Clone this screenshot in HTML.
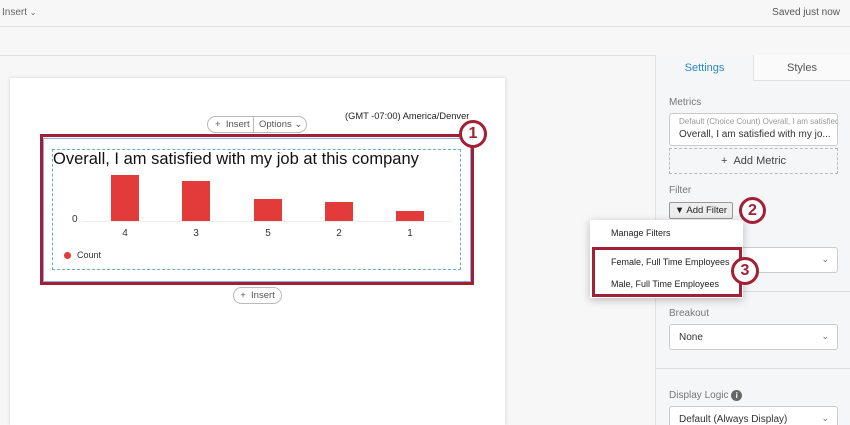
<!DOCTYPE html><html><head><style>
*{box-sizing:border-box;margin:0;padding:0}
html,body{width:850px;height:425px;overflow:hidden}
body{background:#f7f7f7;font-family:"Liberation Sans",sans-serif;position:relative;color:#333}
.a{position:absolute}
.lbl{font-size:10px;color:#777}
.box{background:#fff;border:1px solid #ccc;border-radius:3px}
.circ{position:absolute;border:3px solid #a31f34;border-radius:50%;background:#fff;color:#a31f34;font-weight:bold;text-align:center}
.bar{position:absolute;background:#e33a3a;width:28px}
.xl{position:absolute;top:228px;font-size:10px;width:28px;text-align:center}
.chev{font-size:9px;color:#666}
</style></head><body>
<div class="a" style="left:0;top:0;width:850px;height:27px;border-bottom:1px solid #e2e2e2"></div>
<div class="a" style="left:2px;top:7px;font-size:10px;color:#666">Insert <span style="font-size:8px">&#8964;</span></div>
<div class="a" style="right:10px;top:7px;font-size:10px;color:#555">Saved just now</div>
<div class="a" style="left:0;top:55px;width:850px;border-top:1px solid #e2e2e2"></div>
<div class="a" style="left:655px;top:55px;width:195px;height:370px;border-left:1px solid #e2e2e2;background:#f5f6f7"></div>
<div class="a" style="left:753px;top:55px;width:97px;height:26px;background:#fafafa;border-left:1px solid #e2e2e2;border-bottom:1px solid #e2e2e2;font-size:11px;text-align:center;line-height:26px;color:#555">Styles</div>
<div class="a" style="left:656px;top:55px;width:97px;height:26px;font-size:11px;text-align:center;line-height:26px;color:#2a8ac8">Settings</div>
<div class="a lbl" style="left:669px;top:97px">Metrics</div>
<div class="a box" style="left:669px;top:113px;width:169px;height:33px;overflow:hidden;padding:3px 9px;white-space:nowrap"><div style="font-size:8px;color:#999">Default (Choice Count) Overall, I am satisfied</div><div style="font-size:10px;margin-top:3px">Overall, I am satisfied with my jo...</div></div>
<div class="a" style="left:669px;top:148px;width:169px;height:26px;border:1px dashed #bbb;font-size:11px;text-align:center;line-height:24px;color:#444">+ &nbsp;Add Metric</div>
<div class="a lbl" style="left:669px;top:185px">Filter</div>
<div class="a" style="left:669px;top:202px;width:64px;height:17px;border:1px solid #999;border-radius:2px;background:#eee;font-size:9.5px;line-height:15px;text-align:center;color:#222">&#9660; Add Filter</div>
<div class="a box" style="left:669px;top:247px;width:169px;height:26px"><span class="a chev" style="right:8px;top:6px">&#8964;</span></div>
<div class="a" style="left:656px;top:291px;width:194px;border-top:1px solid #ddd"></div>
<div class="a lbl" style="left:669px;top:308px">Breakout</div>
<div class="a box" style="left:669px;top:324px;width:169px;height:26px;font-size:10px;padding:7px 9px">None<span class="a chev" style="right:8px;top:6px">&#8964;</span></div>
<div class="a" style="left:656px;top:368px;width:194px;border-top:1px solid #ddd"></div>
<div class="a lbl" style="left:669px;top:390px">Display Logic <span style="display:inline-block;width:11px;height:11px;border-radius:50%;background:#666;color:#fff;font-size:8px;text-align:center;line-height:11px;font-weight:bold">i</span></div>
<div class="a box" style="left:669px;top:406px;width:169px;height:26px;font-size:10px;padding:7px 9px">Default (Always Display)<span class="a chev" style="right:8px;top:6px">&#8964;</span></div>
<div class="a" style="left:590px;top:220px;width:153px;height:78px;background:#fff;box-shadow:0 2px 8px rgba(0,0,0,.25)"></div>
<div class="a" style="left:611px;top:228px;font-size:9px;color:#222">Manage Filters</div>
<div class="a" style="left:592px;top:247px;width:150px;height:50px;border:3px solid #a31f34"></div>
<div class="a" style="left:611px;top:257px;font-size:9px;color:#222">Female, Full Time Employees</div>
<div class="a" style="left:611px;top:279px;font-size:9px;color:#222">Male, Full Time Employees</div>
<div class="circ" style="left:739px;top:197px;width:27px;height:27px;font-size:16px;line-height:21px">2</div>
<div class="circ" style="left:731px;top:257px;width:28px;height:28px;font-size:16px;line-height:22px">3</div>
<div class="a" style="left:10px;top:78px;width:495px;height:347px;background:#fff;box-shadow:0 0 4px rgba(0,0,0,.15)"></div>
<div class="a" style="left:345px;top:111px;font-size:9.3px;color:#222">(GMT -07:00) America/Denver</div>
<div class="a" style="left:207px;top:116px;width:100px;height:17px;border:1px solid #bbb;border-radius:9px;background:#fff;font-size:9.5px;line-height:15px;color:#555"><span style="position:absolute;left:7px">+ &nbsp;Insert</span><span style="position:absolute;left:45px;top:-1px;height:17px;border-left:1px solid #bbb"></span><span style="position:absolute;left:51px">Options &#8964;</span></div>
<div class="a" style="left:40px;top:134px;width:434px;height:151px;border:3px solid #a31f34"></div>
<div class="a" style="left:43px;top:138px;width:428px;height:144px;border:1px solid #8ab0e8"></div>
<div class="a" style="left:52px;top:149px;width:409px;height:121px;border:1px dashed #6fa8d8"></div>
<div class="a" style="left:53px;top:150px;font-size:16.5px;color:#111">Overall, I am satisfied with my job at this company</div>
<div class="a" style="left:82px;top:221px;width:370px;border-top:1px solid #eee"></div>
<div class="a" style="left:72px;top:214px;font-size:10px">0</div>
<div class="bar" style="left:111px;top:175px;height:46px"></div>
<div class="bar" style="left:182px;top:181px;height:40px"></div>
<div class="bar" style="left:254px;top:199px;height:22px"></div>
<div class="bar" style="left:325px;top:202px;height:19px"></div>
<div class="bar" style="left:396px;top:211px;height:10px"></div>
<div class="xl" style="left:111px">4</div><div class="xl" style="left:182px">3</div><div class="xl" style="left:254px">5</div><div class="xl" style="left:325px">2</div><div class="xl" style="left:396px">1</div>
<div class="a" style="left:64px;top:252px;width:7px;height:7px;border-radius:50%;background:#e33a3a"></div>
<div class="a" style="left:77px;top:250px;font-size:9px;color:#333">Count</div>
<div class="a" style="left:233px;top:287px;width:49px;height:17px;border:1px solid #bbb;border-radius:9px;background:#fff;font-size:9.5px;line-height:15px;text-align:center;color:#555">+ &nbsp;Insert</div>
<div class="circ" style="left:459px;top:120px;width:28px;height:28px;font-size:16px;line-height:22px">1</div>
</body></html>
